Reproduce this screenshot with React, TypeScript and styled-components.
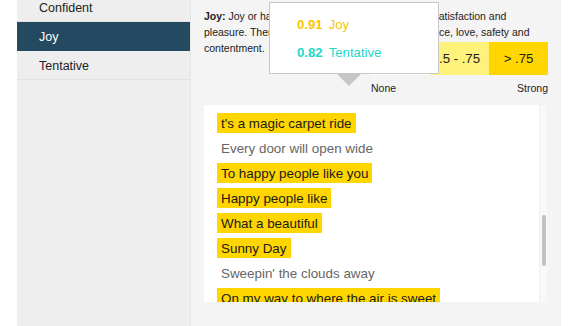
import React from "react";
import styled, { createGlobalStyle } from "styled-components";

const Global = createGlobalStyle`
  html, body { margin: 0; padding: 0; background: #ffffff; }
  body { font-family: "Liberation Sans", Arial, Helvetica, sans-serif; }
  * { box-sizing: border-box; }
`;

const Page = styled.div`
  display: flex;
  height: 326px;
  width: 578px;
  padding-left: 17px;
  overflow: hidden;
  background: #ffffff;
`;

const Sidebar = styled.nav`
  width: 174px;
  flex: none;
  background: #eeeeee;
  border-right: 1px solid #e6e6e6;
`;

const ToneList = styled.ul`
  list-style: none;
  margin: -7px 0 0 0;
  padding: 0;
`;

const ToneItem = styled.li<{ $active?: boolean }>`
  height: 29px;
  line-height: 31px;
  padding-left: 22px;
  font-size: 12.5px;
  color: ${(p) => (p.$active ? "#ffffff" : "#222222")};
  background: ${(p) => (p.$active ? "#244a61" : "transparent")};
  border-bottom: 1px solid ${(p) => (p.$active ? "#244a61" : "#e2e2e2")};
`;

const Panel = styled.section`
  position: relative;
  width: 370px;
  flex: none;
  background: #f4f4f4;
  padding: 8px 0 0 13px;
  display: flex;
  flex-direction: column;
`;

const Description = styled.p`
  margin: 0;
  width: 344px;
  font-size: 10.5px;
  line-height: 16px;
  color: #222222;
  b { font-weight: bold; }
`;

const Legend = styled.div`
  align-self: flex-start;
  margin-left: 167px;
  margin-top: -14px;
  width: 177px;
`;

const LegendBoxes = styled.div`
  display: flex;
`;

const LegendBox = styled.div<{ $bg: string }>`
  width: 59px;
  height: 33px;
  background: ${(p) => p.$bg};
  display: flex;
  align-items: center;
  justify-content: center;
  font-size: 13.2px;
  color: #222222;
`;

const LegendLabels = styled.div`
  display: flex;
  justify-content: space-between;
  margin-top: 5px;
  font-size: 10.5px;
  line-height: 16px;
  color: #222222;
`;

const ScrollBox = styled.div`
  margin-top: 9px;
  width: 343px;
  height: 197px;
  background: #ffffff;
  display: flex;
  overflow: hidden;
`;

const Sentences = styled.div`
  flex: 1;
  padding: 8px 0 0 13px;
  overflow: hidden;
`;

const Sentence = styled.div<{ $hit?: boolean }>`
  width: fit-content;
  height: 20px;
  line-height: 21px;
  padding: 0 4px;
  margin-bottom: 5px;
  font-size: 13.4px;
  white-space: nowrap;
  color: ${(p) => (p.$hit ? "#1a1a1a" : "#666666")};
  background: ${(p) => (p.$hit ? "#ffd600" : "transparent")};
`;

const Track = styled.div`
  width: 8px;
  flex: none;
  background: #f8f8f8;
  border-left: 1px solid #f0f0f0;
  padding: 110px 0 0 2px;
`;

const Thumb = styled.div`
  width: 4px;
  height: 51px;
  border-radius: 2px;
  background: #c2c2c2;
`;

const Tooltip = styled.div`
  position: absolute;
  left: 78px;
  top: 2px;
  width: 170px;
  height: 72px;
  background: #ffffff;
  border: 1px solid #c8c8c8;
  padding: 13px 0 0 27px;
  display: flex;
  flex-direction: column;
  gap: 10px;

  &::after {
    content: "";
    position: absolute;
    left: 67px;
    top: 71px;
    border-left: 12px solid transparent;
    border-right: 12px solid transparent;
    border-top: 12px solid #c6c6c6;
  }
`;

const TipRow = styled.div<{ $color: string }>`
  display: flex;
  gap: 6px;
  height: 18px;
  line-height: 18px;
  font-size: 13.2px;
  color: ${(p) => p.$color};
`;

const Score = styled.span`
  font-weight: bold;
`;

const tones = [
  { name: "Confident" },
  { name: "Joy", active: true },
  { name: "Tentative" },
];

const lines: { text: string; hit: boolean }[] = [
  { text: "t's a magic carpet ride", hit: true },
  { text: "Every door will open wide", hit: false },
  { text: "To happy people like you", hit: true },
  { text: "Happy people like", hit: true },
  { text: "What a beautiful", hit: true },
  { text: "Sunny Day", hit: true },
  { text: "Sweepin' the clouds away", hit: false },
  { text: "On my way to where the air is sweet", hit: true },
];

export default function App() {
  return (
    <>
      <Global />
      <Page>
        <Sidebar>
          <ToneList>
            {tones.map((t) => (
              <ToneItem key={t.name} $active={t.active}>
                {t.name}
              </ToneItem>
            ))}
          </ToneList>
        </Sidebar>
        <Panel>
          <Description>
            <b>Joy:</b> Joy or happiness has shades of enjoyment, satisfaction and
            pleasure. There is a sense of well-being, inner peace, love, safety and
            contentment.
          </Description>
          <Legend>
            <LegendBoxes>
              <LegendBox $bg="#ffffff">&lt; .5</LegendBox>
              <LegendBox $bg="#fff27a">.5 - .75</LegendBox>
              <LegendBox $bg="#ffd600">&gt; .75</LegendBox>
            </LegendBoxes>
            <LegendLabels>
              <span>None</span>
              <span>Strong</span>
            </LegendLabels>
          </Legend>
          <ScrollBox>
            <Sentences>
              {lines.map((l) => (
                <Sentence key={l.text} $hit={l.hit}>
                  {l.text}
                </Sentence>
              ))}
            </Sentences>
            <Track>
              <Thumb />
            </Track>
          </ScrollBox>
          <Tooltip>
            <TipRow $color="#f7c600">
              <Score>0.91</Score>
              <span>Joy</span>
            </TipRow>
            <TipRow $color="#1fd8c8">
              <Score>0.82</Score>
              <span>Tentative</span>
            </TipRow>
          </Tooltip>
        </Panel>
      </Page>
    </>
  );
}
